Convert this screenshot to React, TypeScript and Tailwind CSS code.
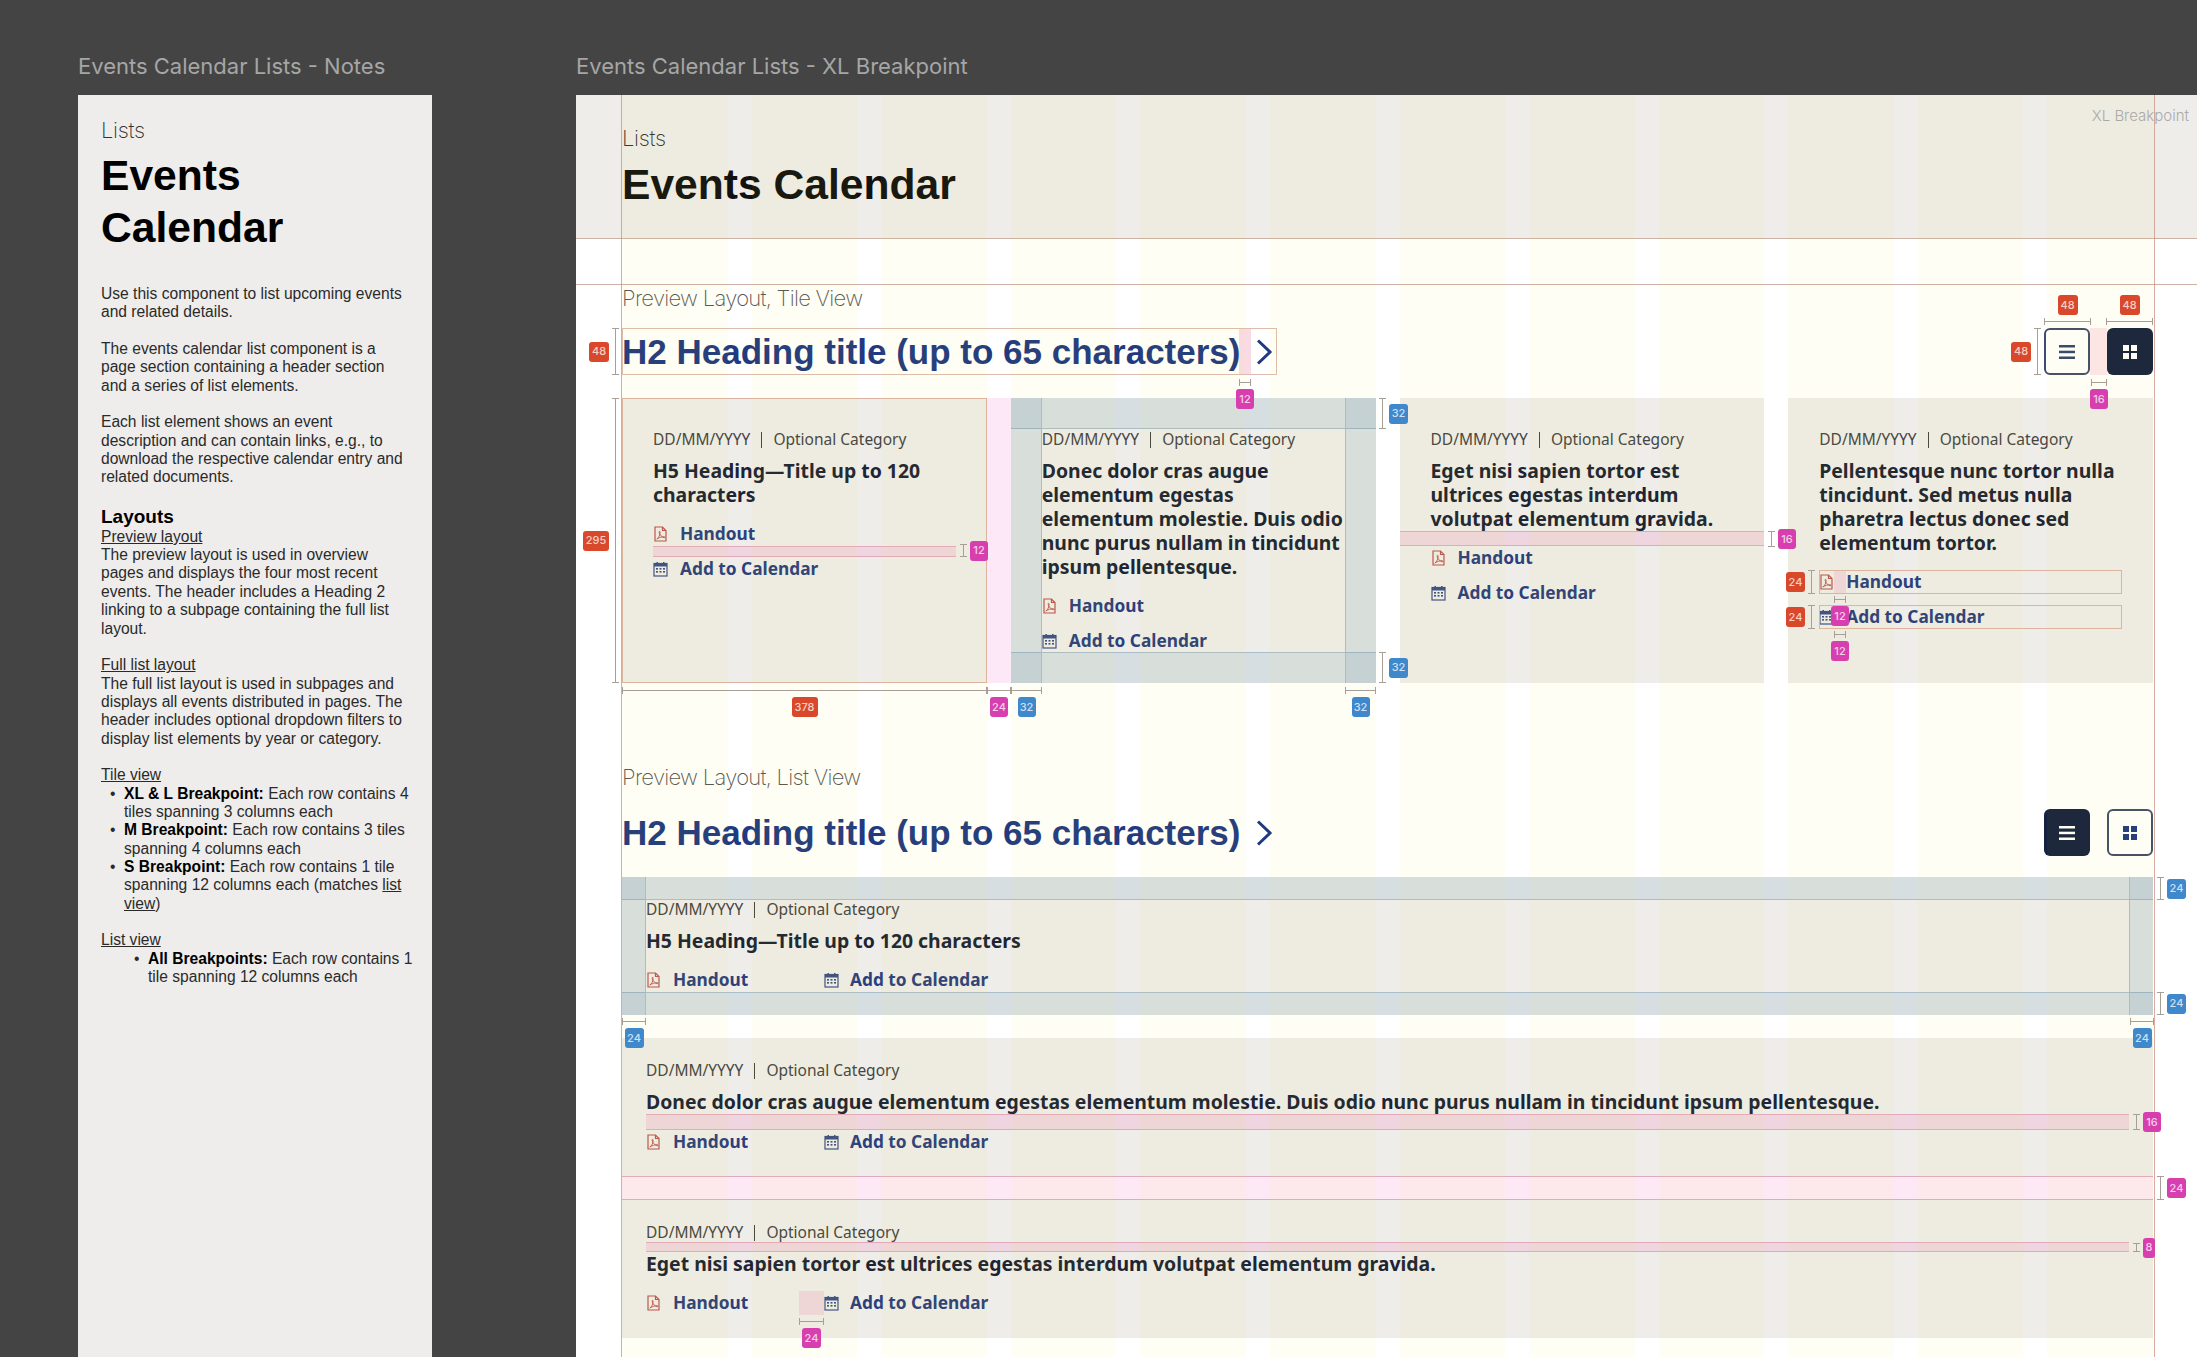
import { Fragment } from 'react';
import type { ReactNode } from 'react';

const hand = "font-['Liberation_Sans',Arial,sans-serif]";
const noto = "font-['Noto_Sans',sans-serif]";
const thin = "font-['Inter',sans-serif] font-extralight";
const pinkBand = 'border-y border-[#e2a9bd] bg-[#f07ab4]/[0.2]';

function PdfIcon() {
  return (
    <svg width="15" height="16" viewBox="0 0 15 16" fill="none" stroke="#b9524f" strokeWidth="1.2" className="shrink-0">
      <path d="M2 1h7.500L13 4.500V15H2z" />
      <path d="M9.500 1v3.500H13" />
      <path d="M3.800 13c2-1 3.500-4.500 3.300-7-.1-1-1-.9-1 .1 0 2.300 3 5.300 5 5.600 1.300.2 1.300-1 0-1-2.300 0-5 .9-7.300 2.300z" strokeWidth="0.9" />
    </svg>
  );
}

function CalendarIcon() {
  return (
    <svg width="15" height="16" viewBox="0 0 15 16" className="shrink-0">
      <rect x="1" y="2.500" width="13" height="12.500" fill="none" stroke="#3b4f86" strokeWidth="1.200" />
      <rect x="1" y="2.500" width="13" height="3" fill="#3b4f86" />
      <rect x="3.500" y="1" width="1.500" height="2.500" fill="#3b4f86" />
      <rect x="10" y="1" width="1.500" height="2.500" fill="#3b4f86" />
      <g fill="#3b4f86">
        <rect x="3" y="7" width="2" height="1.600" />
        <rect x="6.500" y="7" width="2" height="1.600" />
        <rect x="10" y="7" width="2" height="1.600" />
        <rect x="3" y="10" width="2" height="1.600" />
        <rect x="6.500" y="10" width="2" height="1.600" />
        <rect x="10" y="10" width="2" height="1.600" />
      </g>
    </svg>
  );
}

function Chevron() {
  return (
    <svg width="18" height="28" viewBox="0 0 18 28" fill="none" stroke="#1f3a80" strokeWidth="3" className="ml-[4px] shrink-0">
      <path d="M3 2.500l12 11.500L3 25.500" />
    </svg>
  );
}

function ListGlyph({ color }: { color: string }) {
  return (
    <svg width="16" height="16" viewBox="0 0 16 16" fill={color}>
      <rect x="0" y="1" width="16" height="2.500" />
      <rect x="0" y="6.700" width="16" height="2.500" />
      <rect x="0" y="12.500" width="16" height="2.500" />
    </svg>
  );
}

function GridGlyph({ color }: { color: string }) {
  return (
    <svg width="14" height="14" viewBox="0 0 14 14" fill={color}>
      <rect x="0" y="0" width="6" height="6" />
      <rect x="8" y="0" width="6" height="6" />
      <rect x="0" y="8" width="6" height="6" />
      <rect x="8" y="8" width="6" height="6" />
    </svg>
  );
}

function ViewButton({ active, children }: { active?: boolean; children: ReactNode }) {
  return (
    <div
      className={
        active
          ? 'flex h-[47px] w-[46px] items-center justify-center rounded-[6px] bg-[#14213f]'
          : 'flex h-[47px] w-[46px] items-center justify-center rounded-[6px] border-2 border-[#3f4c6b] bg-white'
      }
    >
      {children}
    </div>
  );
}

function Meta() {
  return (
    <div className={`${noto} flex h-[22px] items-center text-[15.500px] text-[#444444]`}>
      <span>DD/MM/YYYY</span>
      <span className="mx-[11px] h-[16px] w-px bg-[#444444]" />
      <span>Optional Category</span>
    </div>
  );
}

function Title({ children, nowrap }: { children: ReactNode; nowrap?: boolean }) {
  return (
    <h5 className={`${noto} text-[19.400px] leading-[24px] font-bold text-[#1c2333] ${nowrap ? 'whitespace-nowrap' : ''}`}>
      {children}
    </h5>
  );
}

/* tile variant: links stacked */
function TileLinks({ marked, outlined }: { marked?: boolean; outlined?: boolean }) {
  const box = outlined
    ? 'flex h-[24px] items-center outline-1 -outline-offset-1 outline-[#dcb3a3]'
    : 'flex h-[24px] items-center';
  return (
    <div className={`${noto} flex flex-col text-[17.300px] font-bold text-[#2b3f7c]`}>
      <div className={box}>
        <PdfIcon />
        <span className={outlined ? 'h-full w-[12px] bg-[#f07ab4]/[0.2]' : 'w-[12px]'} />
        <span>Handout</span>
      </div>
      <div className={marked ? `h-[11px] ${pinkBand}` : 'h-[11px]'} />
      <div className={box}>
        <CalendarIcon />
        <span className="w-[12px]" />
        <span>Add to Calendar</span>
      </div>
    </div>
  );
}

/* list variant: links side by side */
function RowLinks({ marked }: { marked?: boolean }) {
  return (
    <div className={`${noto} flex h-[24px] items-center text-[17.300px] font-bold text-[#2b3f7c]`}>
      <PdfIcon />
      <span className="ml-[12px] w-[126px]">Handout</span>
      <span className={marked ? 'h-full w-[25px] bg-[#f07ab4]/[0.2]' : 'w-[25px]'} />
      <CalendarIcon />
      <span className="ml-[11px]">Add to Calendar</span>
    </div>
  );
}

function SectionHead({ listActive, boxed }: { listActive?: boolean; boxed?: boolean }) {
  return (
    <div className="flex h-[47px] items-center justify-between">
      <div className={boxed ? 'flex h-[47px] w-[655px] items-center outline-1 -outline-offset-1 outline-[#dcbcae]' : 'flex h-[47px] w-[655px] items-center'}>
        <h2 className={`${hand} w-[617px] shrink-0 text-[35px] leading-[44px] font-bold whitespace-nowrap text-[#1f3a80]`}>
          H2 Heading title (up to 65 characters)
        </h2>
        <span className={boxed ? 'h-full w-[12px] bg-[#f9dbe6]' : 'w-[12px]'} />
        <Chevron />
      </div>
      <div className="flex h-full">
        <ViewButton active={listActive}>
          <ListGlyph color={listActive ? '#ffffff' : '#33466f'} />
        </ViewButton>
        <span className={boxed ? 'w-[17px] bg-[#fbe6ee]' : 'w-[17px]'} />
        <ViewButton active={!listActive}>
          <GridGlyph color={listActive ? '#1f3a80' : '#ffffff'} />
        </ViewButton>
      </div>
    </div>
  );
}

/* blue padding guides drawn over a tile or row */
function PaddingGuides({ y, x }: { y: string; x: string }) {
  const band = 'absolute border-[#a9bcc9] bg-[#3f7fb0]/[0.13]';
  return (
    <>
      <div className={`${band} inset-x-0 top-0 border-b ${y}`} />
      <div className={`${band} inset-x-0 bottom-0 border-t ${y}`} />
      <div className={`${band} inset-y-0 left-0 border-r ${x}`} />
      <div className={`${band} inset-y-0 right-0 border-l ${x}`} />
    </>
  );
}

function Badge({ tone, className, children }: { tone: 'o' | 'p' | 'b'; className: string; children: ReactNode }) {
  const bg = tone === 'o' ? 'bg-[#d9482a]' : tone === 'p' ? 'bg-[#d83fae]' : 'bg-[#3f88cb]';
  return (
    <div className={`flex h-[20px] shrink-0 items-center justify-center rounded-[3px] font-['Inter',sans-serif] text-[11px] font-medium text-white/75 ${bg} ${className}`}>
      {children}
    </div>
  );
}

/* vertical measure: bracket with a badge beside it, className holds place and height */
function VMeasure({ className, tone, w, before, children }: { className: string; tone: 'o' | 'p' | 'b'; w: string; before?: boolean; children: ReactNode }) {
  return (
    <div className={`absolute flex items-center gap-[3px] ${before ? 'flex-row-reverse' : ''} ${className}`}>
      <div className="flex h-full w-[7px] justify-center border-y border-[#a79f96]">
        <div className="h-full w-px bg-[#a79f96]" />
      </div>
      <Badge tone={tone} className={w}>{children}</Badge>
    </div>
  );
}

/* horizontal measure: bracket with a badge under it, or over it */
function HMeasure({ className, tone, w, over, children }: { className: string; tone: 'o' | 'p' | 'b'; w: string; over?: boolean; children: ReactNode }) {
  return (
    <div className={`absolute flex items-center gap-[3px] ${over ? 'flex-col-reverse' : 'flex-col'} ${className}`}>
      <div className="flex h-[7px] w-full items-center border-x border-[#a79f96]">
        <div className="h-px w-full bg-[#a79f96]" />
      </div>
      <Badge tone={tone} className={w}>{children}</Badge>
    </div>
  );
}

function Annotations() {
  return (
    <div className="pointer-events-none absolute inset-0">
      {/* section head */}
      <VMeasure before tone="o" w="w-[20px]" className="top-[328px] left-[589px] h-[47px]">48</VMeasure>
      <VMeasure before tone="o" w="w-[26px]" className="top-[398px] left-[583px] h-[285px]">295</VMeasure>
      <HMeasure tone="p" w="w-[18px]" className="top-[379px] left-[1239px] w-[12px]">12</HMeasure>
      <HMeasure over tone="o" w="w-[20px]" className="top-[295px] left-[2044px] w-[47px]">48</HMeasure>
      <HMeasure over tone="o" w="w-[20px]" className="top-[295px] left-[2106px] w-[47px]">48</HMeasure>
      <VMeasure before tone="o" w="w-[20px]" className="top-[328px] left-[2011px] h-[47px]">48</VMeasure>
      <HMeasure tone="p" w="w-[18px]" className="top-[379px] left-[2091px] w-[16px]">16</HMeasure>

      {/* tiles */}
      <HMeasure tone="o" w="w-[26px]" className="top-[687px] left-[622px] w-[365px]">378</HMeasure>
      <HMeasure tone="p" w="w-[18px]" className="top-[687px] left-[987px] w-[24px]">24</HMeasure>
      <HMeasure tone="b" w="w-[18px]" className="top-[687px] left-[1011px] w-[31px]">32</HMeasure>
      <HMeasure tone="b" w="w-[18px]" className="top-[687px] left-[1345px] w-[31px]">32</HMeasure>
      <VMeasure tone="b" w="w-[19px]" className="top-[398px] left-[1379px] h-[31px]">32</VMeasure>
      <VMeasure tone="b" w="w-[19px]" className="top-[652px] left-[1379px] h-[31px]">32</VMeasure>
      <VMeasure tone="p" w="w-[18px]" className="top-[544px] left-[960px] h-[13px]">12</VMeasure>
      <VMeasure tone="p" w="w-[18px]" className="top-[531px] left-[1768px] h-[16px]">16</VMeasure>
      <VMeasure before tone="o" w="w-[19px]" className="top-[570px] left-[1786px] h-[24px]">24</VMeasure>
      <VMeasure before tone="o" w="w-[19px]" className="top-[605px] left-[1786px] h-[24px]">24</VMeasure>
      <HMeasure tone="p" w="w-[18px]" className="top-[596px] left-[1834px] w-[12px]">12</HMeasure>
      <HMeasure tone="p" w="w-[18px]" className="top-[631px] left-[1834px] w-[12px]">12</HMeasure>

      {/* list rows */}
      <VMeasure tone="b" w="w-[19px]" className="top-[877px] left-[2157px] h-[23px]">24</VMeasure>
      <VMeasure tone="b" w="w-[19px]" className="top-[992px] left-[2157px] h-[23px]">24</VMeasure>
      <HMeasure tone="b" w="w-[19px]" className="top-[1018px] left-[622px] w-[24px]">24</HMeasure>
      <HMeasure tone="b" w="w-[19px]" className="top-[1018px] left-[2130px] w-[24px]">24</HMeasure>
      <VMeasure tone="p" w="w-[18px]" className="top-[1114px] left-[2133px] h-[16px]">16</VMeasure>
      <VMeasure tone="p" w="w-[19px]" className="top-[1176px] left-[2157px] h-[24px]">24</VMeasure>
      <VMeasure tone="p" w="w-[12px]" className="top-[1243px] left-[2133px] h-[9px]">8</VMeasure>
      <HMeasure tone="p" w="w-[19px]" className="top-[1318px] left-[799px] w-[25px]">24</HMeasure>
    </div>
  );
}

function Bullet({ children }: { children: ReactNode }) {
  return (
    <li className="flex">
      <span className="w-[23px] shrink-0 pl-[9px]">•</span>
      <span>{children}</span>
    </li>
  );
}

function NotesPanel() {
  return (
    <div className="flex w-[354px] shrink-0 flex-col">
      <div className="flex h-[95px] items-center pt-[37px] font-['Inter',sans-serif] text-[22px] text-[#a6a6a6]">
        Events Calendar Lists - Notes
      </div>
      <div className={`${hand} flex-1 bg-[#eeedec] pt-[22px] pr-[16px] pl-[23px] text-[15.600px] leading-[18.350px] text-[#2a2a2a]`}>
        <div className={`${thin} text-[22px] leading-[26px] tracking-[-0.3px] text-[#333333]`}>Lists</div>
        <h1 className="mt-[6px] w-[300px] text-[42.600px] leading-[52px] font-bold text-black">Events Calendar</h1>
        <p className="mt-[32px] w-[310px]">Use this component to list upcoming events and related details.</p>
        <p className="mt-[18.350px] w-[310px]">The events calendar list component is a page section containing a header section and a series of list elements.</p>
        <p className="mt-[18.350px] w-[310px]">Each list element shows an event description and can contain links, e.g., to download the respective calendar entry and related documents.</p>
        <h3 className="mt-[19px] text-[19px] leading-[22px] font-bold text-black">Layouts</h3>
        <p className="underline">Preview layout</p>
        <p className="w-[310px]">The preview layout is used in overview pages and displays the four most recent events. The header includes a Heading 2 linking to a subpage containing the full list layout.</p>
        <p className="mt-[18.350px] underline">Full list layout</p>
        <p className="w-[310px]">The full list layout is used in subpages and displays all events distributed in pages. The header includes optional dropdown filters to display list elements by year or category.</p>
        <p className="mt-[18.350px] underline">Tile view</p>
        <ul className="w-[310px]">
          <Bullet><b className="text-black">XL &amp; L Breakpoint:</b> Each row contains 4 tiles spanning 3 columns each</Bullet>
          <Bullet><b className="text-black">M Breakpoint:</b> Each row contains 3 tiles spanning 4 columns each</Bullet>
          <Bullet><b className="text-black">S Breakpoint:</b> Each row contains 1 tile spanning 12 columns each (matches <u>list view</u>)</Bullet>
        </ul>
        <p className="mt-[18.350px] underline">List view</p>
        <ul className="pl-[24px]">
          <Bullet><b className="text-black">All Breakpoints:</b> Each row contains 1 tile spanning 12 columns each</Bullet>
        </ul>
      </div>
    </div>
  );
}

const titles = [
  'H5 Heading—Title up to 120 characters',
  'Donec dolor cras augue elementum egestas elementum molestie. Duis odio nunc purus nullam in tincidunt ipsum pellentesque.',
  'Eget nisi sapien tortor est ultrices egestas interdum volutpat elementum gravida.',
  'Pellentesque nunc tortor nulla tincidunt. Sed metus nulla pharetra lectus donec sed elementum tortor.',
];

const rows = titles.slice(0, 3);

export default function App() {
  return (
    <div className="relative flex h-[1357px] gap-[144px] overflow-hidden bg-[#444444] pl-[78px]">
      <NotesPanel />

      <div className="flex min-w-0 flex-1 flex-col">
        <div className="flex h-[95px] items-center pt-[37px] font-['Inter',sans-serif] text-[22px] text-[#a6a6a6]">
          Events Calendar Lists - XL Breakpoint
        </div>

        <div className="relative flex-1 bg-white">
          {/* header band */}
          <div className={`${hand} h-[144px] border-b border-[#cdb0a6] bg-[#eeedea] pt-[30px] pl-[46px]`}>
            <div className={`${thin} text-[22px] leading-[26px] tracking-[-0.3px] text-[#333333]`}>Lists</div>
            <div className="mt-[7px] text-[42.600px] leading-[52px] font-bold text-[#111111]">Events Calendar</div>
          </div>
          <div className="h-[46px] border-b border-[#cdb0a6]" />

          <div className="pr-[44px] pl-[46px]">
            {/* tile view */}
            <div className={`${thin} h-[26px] text-[22px] leading-[26px] tracking-[-0.7px] text-[#555555]`}>Preview Layout, Tile View</div>
            <div className="mt-[17px]">
              <SectionHead boxed />
            </div>
            <div className="mt-[23px] grid h-[285px] grid-cols-4 gap-x-[24px]">
              {titles.map((title, i) => (
                <div
                  key={title}
                  className={i === 0 ? 'relative bg-[#eeedea] px-[31px] pt-[31px] outline-1 -outline-offset-1 outline-[#dcb3a3]' : 'relative bg-[#eeedea] px-[31px] pt-[31px]'}
                >
                  {i === 0 && <div className="absolute inset-y-0 -right-[24px] w-[24px] bg-[#fce8f7]" />}
                  {i === 1 && <PaddingGuides y="h-[31px]" x="w-[31px]" />}
                  <div className="relative">
                    <Meta />
                    <div className="h-[8px]" />
                    <Title>{title}</Title>
                    {i === 2 ? <div className={`-mx-[31px] h-[15px] ${pinkBand}`} /> : <div className="h-[15px]" />}
                    <TileLinks marked={i === 0} outlined={i === 3} />
                  </div>
                </div>
              ))}
            </div>

            {/* list view */}
            <div className={`${thin} mt-[81px] h-[26px] text-[22px] leading-[26px] tracking-[-0.7px] text-[#555555]`}>Preview Layout, List View</div>
            <div className="mt-[19px]">
              <SectionHead listActive />
            </div>
            <div className="mt-[21px] flex flex-col">
              {rows.map((title, i) => (
                <Fragment key={title}>
                  <div className="relative h-[138px] shrink-0 bg-[#eeedea] px-[24px] pt-[22px]">
                    {i === 0 && <PaddingGuides y="h-[23px]" x="w-[24px]" />}
                    <div className="relative">
                      <Meta />
                      {i === 2 ? <div className={`-mt-[2px] h-[10px] ${pinkBand}`} /> : <div className="h-[8px]" />}
                      <Title nowrap>{title}</Title>
                      {i === 1 ? <div className={`h-[16px] ${pinkBand}`} /> : <div className="h-[15px]" />}
                      <RowLinks marked={i === 2} />
                    </div>
                  </div>
                  {i === 0 && <div className="h-[23px] shrink-0" />}
                  {i === 1 && <div className="h-[24px] shrink-0 border-y border-[#e0a9c0] bg-[#fde9f5]" />}
                </Fragment>
              ))}
            </div>
          </div>

          {/* 12 column overlay */}
          <div className="pointer-events-none absolute inset-0 grid grid-cols-12 gap-x-[24px] pr-[44px] pl-[46px]">
            {Array.from({ length: 12 }, (_, i) => (
              <div key={i} className="bg-[#fff000]/[0.04]" />
            ))}
          </div>
          <div className="pointer-events-none absolute inset-y-0 left-[45px] w-px bg-[#c9897c]/70" />
          <div className="pointer-events-none absolute inset-y-0 left-[1578px] w-px bg-[#c9897c]/70" />
          <div className="absolute top-[10px] right-[8px] font-['Inter',sans-serif] text-[15px] font-light text-[#aaaaaa]">XL Breakpoint</div>
        </div>
      </div>

      <Annotations />
    </div>
  );
}
